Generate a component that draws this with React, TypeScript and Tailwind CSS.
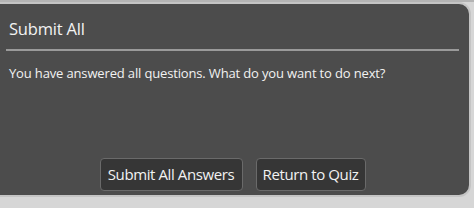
export default function App() {
  const font = { fontFamily: '"Open Sans", "Noto Sans", sans-serif' };
  return (
    <div className="w-[474px] h-[208px] bg-[#d6d6d6] overflow-hidden" style={font}>
      <div className="h-[2px] bg-[#b4b4b4]" />
      <div className="ml-[-6px] w-[477px] h-[195px] border-2 border-[#c4c4c4] rounded-r-[12px] bg-[#4c4c4c] flex flex-col">
        <div className="pl-[13px] pt-[15px] h-[45px] text-[16.5px] leading-[20px] text-[#f2f2f2] tracking-[-0.2px]">
          Submit All
        </div>
        <div className="ml-[10px] mr-[10px] h-[2px] bg-[#9a9a9a]" />
        <div className="pl-[13px] pt-[14px] text-[13px] leading-[16px] text-[#f2f2f2] tracking-[-0.15px]">
          You have answered all questions. What do you want to do next?
        </div>
        <div className="flex-1" />
        <div className="flex justify-center gap-[13px] pb-[4px]">
          <button className="h-[33px] w-[143px] rounded-[4px] border border-[#6a6a6a] bg-[#363636] text-[15px] text-[#f2f2f2] tracking-[-0.4px]">
            Submit All Answers
          </button>
          <button className="h-[33px] w-[110px] rounded-[4px] border border-[#6a6a6a] bg-[#363636] text-[15px] text-[#f2f2f2] tracking-[-0.4px]">
            Return to Quiz
          </button>
        </div>
      </div>
    </div>
  );
}
